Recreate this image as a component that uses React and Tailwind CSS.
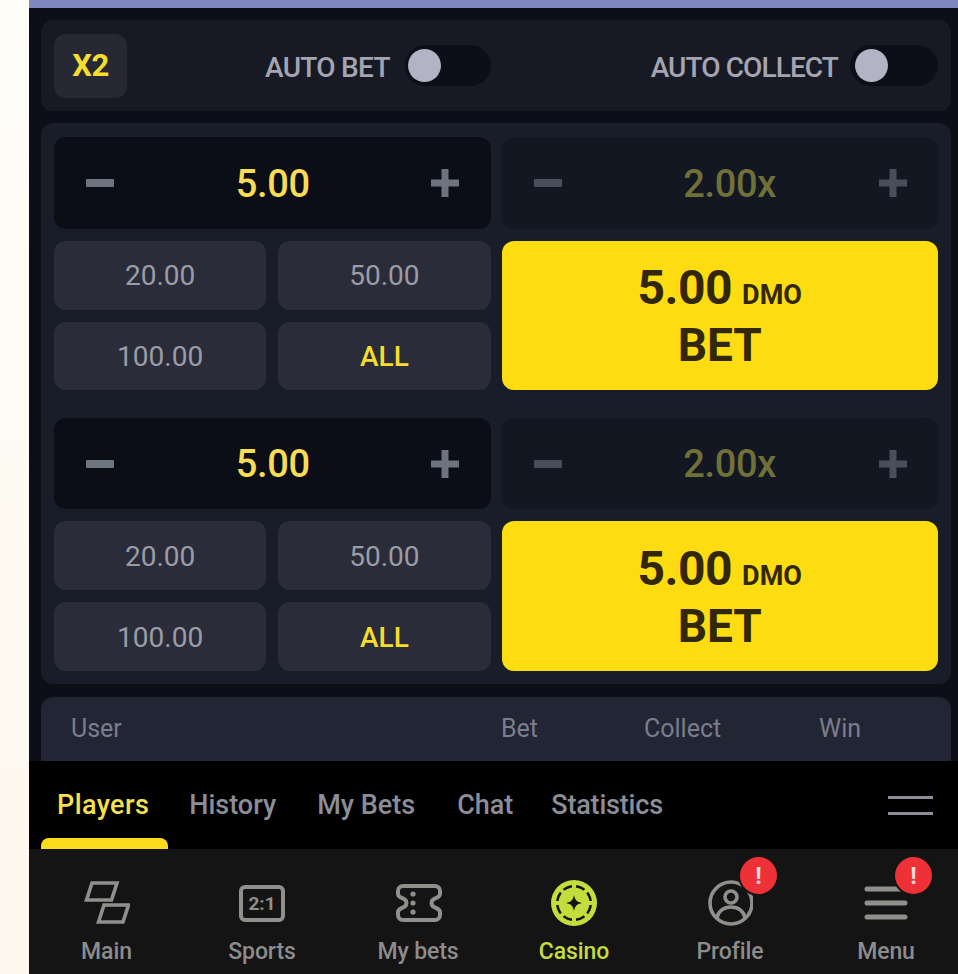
import React from "react";

const din = { fontFamily: '"Roboto", "Liberation Sans", sans-serif' };

function Minus({ dim }) {
  return (
    <svg width="28" height="28" viewBox="0 0 28 28" className={dim ? "opacity-60" : ""}>
      <rect x="0" y="10" width="28" height="8" rx="1" fill="#6e7380" />
    </svg>
  );
}
function Plus({ dim }) {
  return (
    <svg width="28" height="28" viewBox="0 0 28 28" className={dim ? "opacity-60" : ""}>
      <path d="M10.5 0h7v10.5H28v7H17.5V28h-7V17.5H0v-7h10.5z" fill="#6e7380" />
    </svg>
  );
}

function Stepper({ value, dim, suffix, short }) {
  return (
    <div className={`${short ? "h-[91px]" : "h-[92px]"} rounded-xl flex items-center justify-between pl-[32px] pr-[31px] ${dim ? "bg-[#131722]" : "bg-[#0b0e16]"}`}>
      <Minus dim={dim} />
      <span className={`relative top-[1px] text-[38px] font-medium tracking-[-0.4px] ${dim ? "text-[#6f7139]" : "text-[#f8dc55]"}`}>
        {value}
        {suffix ? <span className="absolute left-full">{suffix}</span> : null}
      </span>
      <Plus dim={dim} />
    </div>
  );
}

function Chip({ children, yellow }) {
  return (
    <div className={`flex-1 rounded-xl bg-[#2a2d39] flex items-center justify-center pt-[2px] text-[28px] ${yellow ? "text-[#f5dc2e] font-medium" : "text-[#9a9ca6]"}`}>
      {children}
    </div>
  );
}

function BetBlock({ short }) {
  return (
    <div className="grid grid-cols-2 gap-x-[11px] gap-y-[12px]">
      <Stepper value="5.00" short={short} />
      <Stepper value="2.00" suffix="x" dim short={short} />
      <div className={`grid grid-cols-2 grid-rows-2 gap-x-[12px] gap-y-[12px] ${short ? "h-[150px]" : "h-[149px]"}`}>
        <Chip>20.00</Chip>
        <Chip>50.00</Chip>
        <Chip>100.00</Chip>
        <Chip yellow>ALL</Chip>
      </div>
      <div className={`${short ? "h-[150px]" : "h-[149px]"} rounded-xl bg-[#fddc12] flex flex-col items-center justify-center text-[#33270a] font-bold`}>
        <div className="flex items-baseline gap-[10px] leading-[52px]">
          <span className="text-[48px] tracking-[-0.5px]">5.00</span>
          <span className="text-[27px]">DMO</span>
        </div>
        <div className="text-[46px] leading-[48px]">BET</div>
      </div>
    </div>
  );
}

function Toggle({ wide }) {
  return (
    <div className={`${wide ? "w-[88px]" : "w-[86px]"} h-[41px] rounded-full bg-[#0c0f17] flex items-center ${wide ? "pl-[5px]" : "pl-[3px]"}`}>
      <div className="w-[33px] h-[33px] rounded-full bg-[#b2b3c4]" />
    </div>
  );
}

function Badge() {
  return (
    <div className="absolute -top-[23px] -right-[24px] w-[37px] h-[37px] rounded-full bg-[#ee3137] ring-2 ring-[#141414] flex items-center justify-center text-[#f8d6d6] text-[24px] font-bold leading-none">
      !
    </div>
  );
}

function NavItem({ icon, label, active, badge, first }) {
  return (
    <div className={`${first ? "w-[155px]" : "w-[156px]"} shrink-0 flex flex-col items-center`}>
      <div className="relative h-[46px] flex items-center justify-center">
        {icon}
        {badge ? <Badge /> : null}
      </div>
      <div className={`mt-[12px] text-[23px] leading-[28px] font-medium tracking-[-0.1px] ${active ? "text-[#c4dc3c]" : "text-[#8c8c8c]"}`}>
        {label}
      </div>
    </div>
  );
}

const grey = "#918f8c";

const MainIcon = (
  <svg width="46" height="46" viewBox="0 0 46 46" fill="none" stroke={grey} strokeWidth="3.6">
    <path d="M2.5 20 8 3h25l-5.500 17z" />
    <path d="M14.500 42 20 25h24.500L39 42z" />
  </svg>
);
const SportsIcon = (
  <div className="w-[46px] h-[37px] rounded-md border-[4px] border-[#918f8c] flex items-center justify-center text-[19px] font-bold text-[#918f8c] leading-none">
    2:1
  </div>
);
const TicketIcon = (
  <svg className="ml-[2px]" width="48" height="38" viewBox="0 0 48 38" fill="none" stroke={grey} strokeWidth="4">
    <path d="M8 2h32a5 5 0 0 1 5 5v3c0 3-4 4-6 5a4.500 4.500 0 0 0 0 8c2 1 6 2 6 5v3a5 5 0 0 1-5 5H8a5 5 0 0 1-5-5v-3c0-3 4-4 6-5a4.500 4.500 0 0 0 0-8c-2-1-6-2-6-5V7a5 5 0 0 1 5-5z" />
    <circle cx="18" cy="10" r="2.600" fill={grey} stroke="none" />
    <circle cx="18" cy="19" r="2.600" fill={grey} stroke="none" />
    <circle cx="18" cy="28" r="2.600" fill={grey} stroke="none" />
  </svg>
);
const ChipIcon = (
  <svg width="46" height="46" viewBox="0 0 46 46">
    <circle cx="23" cy="23" r="23" fill="#c4dc3c" />
    <circle cx="23" cy="23" r="18" fill="#141414" />
    <circle cx="23" cy="23" r="15.500" fill="#c4dc3c" />
    <g stroke="#c4dc3c" strokeWidth="4">
      <path d="M23 3v10M23 33v10M3 23h10M33 23h10M8.900 8.900l7 7M30.100 30.100l7 7M37.100 8.900l-7 7M15.900 30.100l-7 7" />
    </g>
    <path d="M23 15c.9 5 3 7.100 8 8-5 .9-7.100 3-8 8-.9-5-3-7.100-8-8 5-.9 7.100-3 8-8z" fill="#141414" />
  </svg>
);
const ProfileIcon = (
  <svg width="46" height="46" viewBox="0 0 46 46" fill="none" stroke={grey} strokeWidth="3.600">
    <circle cx="24" cy="23" r="21" />
    <circle cx="24" cy="17" r="6" />
    <path d="M10 38c1-7 7-11 14-11s13 4 14 11" />
  </svg>
);
const MenuIcon = (
  <svg width="44" height="34" viewBox="0 0 44 34" fill="none" stroke={grey} strokeWidth="5" strokeLinecap="round">
    <path d="M3 3h38M3 17h38M3 31h38" />
  </svg>
);

export default function App() {
  return (
    <div style={din} className="w-[958px] h-[974px] overflow-hidden flex bg-[#fffaf1]">
      <div className="w-[29px] shrink-0 bg-gradient-to-b from-[#fffdf8] to-[#fdf8ee]" />
      <div className="flex-1 flex flex-col bg-[#0c0f17] min-w-0">
        <div className="h-[8px] bg-[#7f88bf] shrink-0" />
        <div className="flex-1 min-h-0 pl-[12px] pr-[7px] pt-[12px] flex flex-col overflow-hidden">
          <div className="h-[91px] shrink-0 rounded-xl bg-[#171a24] flex items-center pl-[13px] pr-[13px]">
            <div className="w-[73px] h-[64px] rounded-xl bg-[#262933] flex items-center justify-center pt-[2px] text-[31px] font-bold text-[#f5dc2e] tracking-[-0.5px]">
              X2
            </div>
            <div className="ml-[138px] flex items-center gap-[15px]">
              <span className="relative top-[2px] text-[28px] font-medium text-[#a4a5b0] tracking-[-0.7px]">AUTO BET</span>
              <Toggle />
            </div>
            <div className="ml-auto flex items-center gap-[12px]">
              <span className="relative top-[2px] text-[28px] font-medium text-[#a4a5b0] tracking-[-0.9px]">AUTO COLLECT</span>
              <Toggle wide />
            </div>
          </div>
          <div className="mt-[12px] h-[561px] shrink-0 rounded-xl bg-[#191d29] px-[13px] pt-[14px] flex flex-col gap-[28px]">
            <BetBlock />
            <BetBlock short />
          </div>
          <div className="mt-[13px] flex-1 rounded-t-xl bg-[#222533] flex items-center text-[25px] text-[#7b7d8c]">
            <span className="ml-[30px] w-[430px]">User</span>
            <span className="w-[143px]">Bet</span>
            <span className="w-[175px]">Collect</span>
            <span>Win</span>
          </div>
        </div>
        <div className="h-[88px] shrink-0 bg-black flex flex-col relative">
          <div className="flex items-center h-[88px] pl-[28px] pr-[25px] text-[27px] text-[#8b8d98] font-medium">
            <span className="text-[#f4e04d] tracking-[0.4px]">Players</span>
            <span className="ml-[40px]">History</span>
            <span className="ml-[41px]">My Bets</span>
            <span className="ml-[42px]">Chat</span>
            <span className="ml-[38px] tracking-[-0.2px]">Statistics</span>
            <svg className="ml-auto" width="45" height="20" viewBox="0 0 45 20" fill="#8b8d98">
              <rect x="0" y="1" width="45" height="3" />
              <rect x="0" y="17" width="45" height="3" />
            </svg>
          </div>
          <div className="absolute left-[12px] bottom-0 w-[127px] h-[11px] rounded-t-lg bg-[#fddc1c]" />
        </div>
        <div className="h-[125px] shrink-0 bg-[#141414] flex pt-[31px] overflow-hidden">
          <NavItem icon={MainIcon} label="Main" first />
          <NavItem icon={SportsIcon} label="Sports" />
          <NavItem icon={TicketIcon} label="My bets" />
          <NavItem icon={ChipIcon} label="Casino" active />
          <NavItem icon={ProfileIcon} label="Profile" badge />
          <NavItem icon={MenuIcon} label="Menu" badge />
        </div>
      </div>
    </div>
  );
}
